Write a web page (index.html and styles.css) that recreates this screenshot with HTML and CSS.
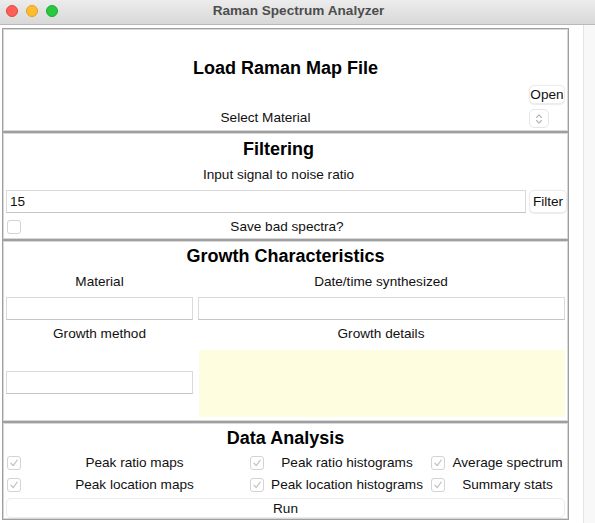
FILE: index.html
```html
<!DOCTYPE html>
<html>
<head>
<meta charset="utf-8">
<link rel="stylesheet" href="styles.css">
</head>
<body>
<div class="window">
  <div class="titlebar">
    <div class="lights">
      <span class="light red"></span>
      <span class="light yellow"></span>
      <span class="light green"></span>
    </div>
    <div class="title">Raman Spectrum Analyzer</div>
  </div>
  <div class="main">
    <div class="panels">
      <section class="frame f-load">
        <h2 class="heading span2">Load Raman Map File</h2>
        <div class="empty"></div>
        <button class="btn btn-open">Open</button>
        <div class="label">Select Material</div>
        <div class="spinner">
          <svg width="8" height="12" viewBox="0 0 8 12"><path d="M1.5 4.5 L4 2 L6.5 4.5 M1.5 7.5 L4 10 L6.5 7.5" fill="none" stroke="#b5b5b5" stroke-width="1.1" stroke-linecap="round" stroke-linejoin="round"/></svg>
        </div>
      </section>

      <section class="frame f-filter">
        <h2 class="heading shifted">Filtering</h2>
        <div class="label shifted l-snr">Input signal to noise ratio</div>
        <div class="entry-row">
          <div class="entry">15</div>
          <button class="btn btn-filter">Filter</button>
        </div>
        <div class="check-row">
          <span class="cb"></span>
          <div class="label cb-label">Save bad spectra?</div>
        </div>
      </section>

      <section class="frame f-growth">
        <h2 class="heading">Growth Characteristics</h2>
        <div class="growth-grid">
          <div class="label">Material</div>
          <div class="label">Date/time synthesized</div>
          <div class="entry e-mat"></div>
          <div class="entry e-date"></div>
          <div class="label">Growth method</div>
          <div class="label">Growth details</div>
          <div class="entry e-method"></div>
          <div class="textarea"></div>
        </div>
      </section>

      <section class="frame f-data">
        <h2 class="heading">Data Analysis</h2>
        <div class="data-grid">
          <span class="cb checked"><svg width="10" height="10" viewBox="0 0 10 10"><path d="M2 5.2 L4.2 7.6 L8.2 2.2" fill="none" stroke="#c6c6c6" stroke-width="1.3" stroke-linecap="round" stroke-linejoin="round"/></svg></span>
          <div class="label">Peak ratio maps</div>
          <span class="cb checked"><svg width="10" height="10" viewBox="0 0 10 10"><path d="M2 5.2 L4.2 7.6 L8.2 2.2" fill="none" stroke="#c6c6c6" stroke-width="1.3" stroke-linecap="round" stroke-linejoin="round"/></svg></span>
          <div class="label">Peak ratio histograms</div>
          <span class="cb checked"><svg width="10" height="10" viewBox="0 0 10 10"><path d="M2 5.2 L4.2 7.6 L8.2 2.2" fill="none" stroke="#c6c6c6" stroke-width="1.3" stroke-linecap="round" stroke-linejoin="round"/></svg></span>
          <div class="label">Average spectrum</div>
          <span class="cb checked"><svg width="10" height="10" viewBox="0 0 10 10"><path d="M2 5.2 L4.2 7.6 L8.2 2.2" fill="none" stroke="#c6c6c6" stroke-width="1.3" stroke-linecap="round" stroke-linejoin="round"/></svg></span>
          <div class="label">Peak location maps</div>
          <span class="cb checked"><svg width="10" height="10" viewBox="0 0 10 10"><path d="M2 5.2 L4.2 7.6 L8.2 2.2" fill="none" stroke="#c6c6c6" stroke-width="1.3" stroke-linecap="round" stroke-linejoin="round"/></svg></span>
          <div class="label">Peak location histograms</div>
          <span class="cb checked"><svg width="10" height="10" viewBox="0 0 10 10"><path d="M2 5.2 L4.2 7.6 L8.2 2.2" fill="none" stroke="#c6c6c6" stroke-width="1.3" stroke-linecap="round" stroke-linejoin="round"/></svg></span>
          <div class="label">Summary stats</div>
        </div>
        <button class="btn btn-run">Run</button>
      </section>
    </div>
    <div class="gutter"></div>
    <div class="strip"></div>
  </div>
</div>
</body>
</html>
```

FILE: styles.css
```css
* { box-sizing: border-box; }
html, body { margin: 0; padding: 0; }
body {
  width: 595px;
  height: 523px;
  overflow: hidden;
  background: #fff;
  font-family: "Liberation Sans", Arial, sans-serif;
  font-size: 13.6px;
  color: #111;
}
.window {
  width: 595px;
  height: 523px;
  display: flex;
  flex-direction: column;
}
.titlebar {
  height: 25px;
  flex: none;
  background: linear-gradient(#ececec, #d8d8d8);
  border-bottom: 1px solid #b9b9b9;
  display: flex;
  align-items: center;
  position: relative;
}
.lights {
  display: flex;
  gap: 8px;
  padding-left: 6px;
  margin-top: -2px;
}
.light {
  width: 12px;
  height: 12px;
  border-radius: 50%;
  display: block;
}
.red { background: #fe5f57; border: 0.5px solid #e14940; }
.yellow { background: #febc2e; border: 0.5px solid #dfa023; }
.green { background: #28c840; border: 0.5px solid #1eab2e; }
.title {
  position: absolute;
  left: 0;
  right: 0;
  top: 3px;
  text-align: center;
  font-weight: bold;
  font-size: 13.6px;
  color: #4d4d4d;
  padding-left: 2px;
}
.main {
  flex: 1;
  display: flex;
}
.panels {
  width: 567px;
  margin-left: 2px;
  margin-top: 3px;
  display: flex;
  flex-direction: column;
}
.gutter { flex: 1; }
.strip {
  width: 12px;
  background: #f8f8f8;
  border-left: 1px solid #e4e4e4;
}
.frame {
  border: 1px solid #9f9f9f;
  box-shadow: inset 1px 1px 0 #d8d8d8, inset -1px -1px 0 #d8d8d8;
  flex: none;
}
.heading {
  margin: 0;
  font-size: 18px;
  font-weight: bold;
  line-height: 22px;
  text-align: center;
  color: #000;
}
.label {
  line-height: 18px;
  text-align: center;
  color: #111;
}
.btn {
  font-family: inherit;
  font-size: 13.6px;
  color: #111;
  background: #fff;
  border: 1px solid #ececec;
  border-radius: 5px;
  box-shadow: 0 0.5px 1px rgba(0,0,0,0.08);
  padding: 0;
  line-height: 17px;
  height: 19px;
}
.entry {
  height: 23px;
  border: 1px solid #dadada;
  border-bottom-color: #c4c4c4;
  background: #fff;
  padding-left: 3px;
  line-height: 21px;
  color: #111;
}
.cb {
  width: 14px;
  height: 14px;
  border: 1px solid #d3d3d3;
  border-radius: 3px;
  background: #fff;
  display: flex;
  align-items: center;
  justify-content: center;
}

/* Frame 1 */
.f-load {
  height: 104px;
  display: grid;
  grid-template-columns: 1fr 40px;
  grid-template-rows: 22px 19px 20px;
  row-gap: 6px;
  padding: 28px 1px 0 1px;
}
.span2 { grid-column: 1 / 3; }
.btn-open {
  width: 36px;
  justify-self: start;
  margin-left: 2px;
}
.f-load .label { align-self: center; margin-top: -4px; }
.spinner {
  width: 20px;
  height: 19px;
  margin-left: 2px;
  margin-top: -1px;
  border: 1px solid #e6e6e6;
  border-radius: 5px;
  display: flex;
  align-items: center;
  justify-content: center;
}

/* Frame 2 */
.f-filter {
  height: 108px;
  padding: 5px 1px 0 1px;
  display: flex;
  flex-direction: column;
}
.shifted { padding-right: 14px; }
.l-snr { margin-top: 6px; }
.entry-row {
  display: grid;
  grid-template-columns: 1fr 40px;
  margin-top: 6px;
}
.entry-row .entry { margin: 0 1px 0 2px; }
.btn-filter {
  width: 38px;
  height: 23px;
  margin-left: 2px;
}
.check-row {
  display: flex;
  align-items: center;
  margin-top: 5px;
  padding-left: 3px;
}
.cb-label { flex: 1; padding-right: 17px; padding-left: 3px; }

/* Frame 3 */
.f-growth {
  height: 182px;
  padding: 4px 1px 0 1px;
}
.growth-grid {
  display: grid;
  grid-template-columns: 191px 1fr;
  grid-template-rows: 18px 30px 26px 70px;
  margin-top: 6px;
}
.growth-grid .label { align-self: center; }
.e-mat { margin: 0 2px 1px 2px; align-self: end; }
.e-date { margin: 0 2px 1px 3px; align-self: end; }
.e-method { margin: 24px 2px 0 2px; align-self: start; }
.textarea {
  background: #fffde0;
  margin: 3px 2px 0 4px;
  height: 67px;
}

/* Frame 4 */
.f-data {
  height: 98px;
  padding: 4px 1px 0 1px;
  display: flex;
  flex-direction: column;
}
.data-grid {
  display: grid;
  grid-template-columns: 19px 223px 21px 160px 21px 1fr;
  grid-auto-rows: 22px;
  align-items: center;
  margin-top: 3px;
}
.data-grid .cb { justify-self: center; }
.btn-run {
  margin: 2px 2px 0 2px;
  height: 20px;
  box-shadow: none;
  border-color: #ececec;
}
```
